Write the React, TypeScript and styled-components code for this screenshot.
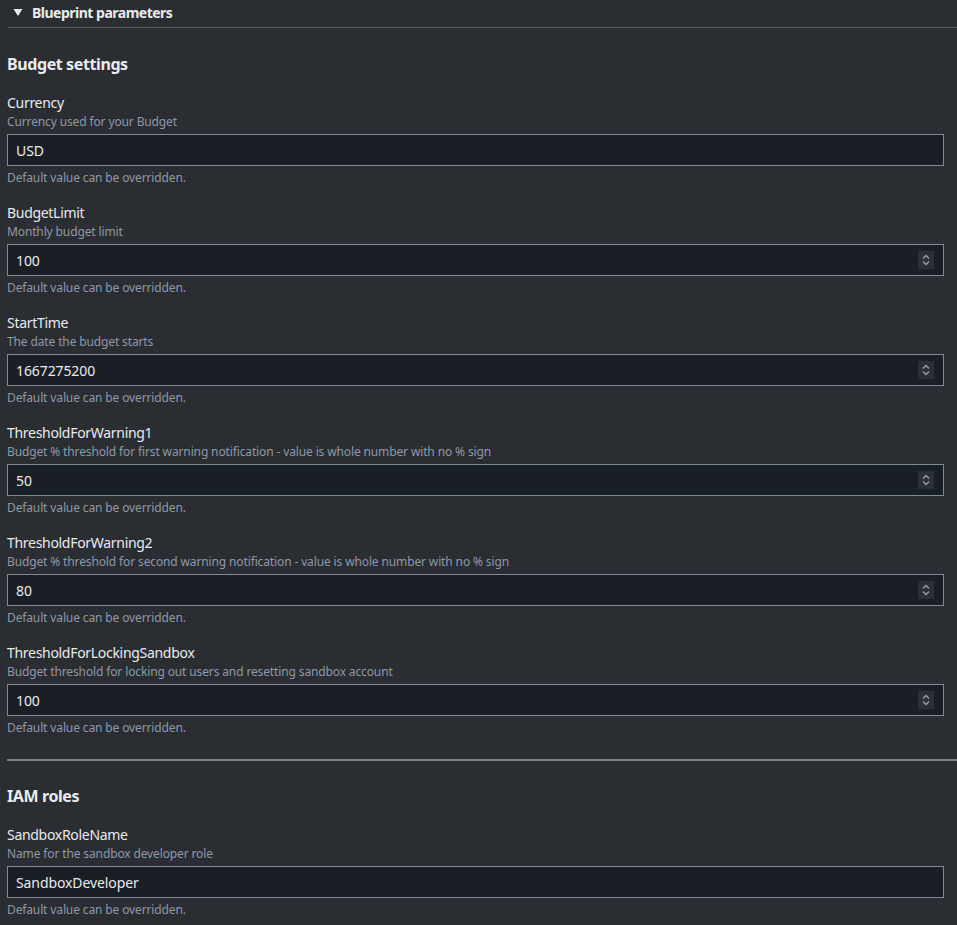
import styled, { createGlobalStyle } from "styled-components";

const GlobalStyle = createGlobalStyle`
  body {
    margin: 0;
    background: #2a2e33;
    font-family: "Noto Sans", "Open Sans", sans-serif;
    color: #d5dbdb;
  }
`;

type Field = {
  name: string;
  description: string;
  value: string;
  numeric?: boolean;
};

const budgetFields: Field[] = [
  { name: "Currency", description: "Currency used for your Budget", value: "USD" },
  { name: "BudgetLimit", description: "Monthly budget limit", value: "100", numeric: true },
  { name: "StartTime", description: "The date the budget starts", value: "1667275200", numeric: true },
  {
    name: "ThresholdForWarning1",
    description:
      "Budget % threshold for first warning notification - value is whole number with no % sign",
    value: "50",
    numeric: true,
  },
  {
    name: "ThresholdForWarning2",
    description:
      "Budget % threshold for second warning notification - value is whole number with no % sign",
    value: "80",
    numeric: true,
  },
  {
    name: "ThresholdForLockingSandbox",
    description: "Budget threshold for locking out users and resetting sandbox account",
    value: "100",
    numeric: true,
  },
];

const iamFields: Field[] = [
  {
    name: "SandboxRoleName",
    description: "Name for the sandbox developer role",
    value: "SandboxDeveloper",
  },
];

const Spinner = () => (
  <SpinBox>
    <svg width="10" height="14" viewBox="0 0 10 14" fill="none">
      <path d="M2 5.5 L5 2.5 L8 5.5" stroke="#9aa0ab" strokeWidth="1.3" />
      <path d="M2 8.5 L5 11.5 L8 8.5" stroke="#9aa0ab" strokeWidth="1.3" />
    </svg>
  </SpinBox>
);

const FormField = ({ field }: { field: Field }) => (
  <FieldWrap>
    <Label>{field.name}</Label>
    <Description>{field.description}</Description>
    <InputBox>
      <InputText>{field.value}</InputText>
      {field.numeric && <Spinner />}
    </InputBox>
    <Hint>Default value can be overridden.</Hint>
  </FieldWrap>
);

const App = () => {
  return (
    <>
      <GlobalStyle />
      <Page>
        <ExpandHeader>
          <svg width="10" height="10" viewBox="0 0 10 10">
            <path d="M0.5 2 L9.5 2 L5 9 Z" fill="#e9ebed" />
          </svg>
          <HeaderTitle>Blueprint parameters</HeaderTitle>
        </ExpandHeader>

        <Section $top={25}>
          <SectionTitle>Budget settings</SectionTitle>
          <FieldList>
            {budgetFields.map((f) => (
              <FormField key={f.name} field={f} />
            ))}
          </FieldList>
        </Section>

        <Divider />

        <Section $top={24}>
          <SectionTitle>IAM roles</SectionTitle>
          <FieldList>
            {iamFields.map((f) => (
              <FormField key={f.name} field={f} />
            ))}
          </FieldList>
        </Section>
      </Page>
    </>
  );
};

export default App;

const Page = styled.div`
  width: 957px;
  min-height: 925px;
  padding-left: 7px;
  box-sizing: border-box;
`;

const ExpandHeader = styled.div`
  height: 28px;
  box-sizing: border-box;
  padding: 0 0 3px 5px;
  margin-left: 1px;
  display: flex;
  align-items: center;
  gap: 9px;
  border-bottom: 1px solid #5a5f66;
`;

const HeaderTitle = styled.span`
  font-size: 14px;
  font-weight: 700;
  letter-spacing: -0.5px;
  color: #e9ebed;
`;

const Section = styled.div<{ $top: number }>`
  padding-right: 13px;
  padding-top: ${({ $top }) => $top}px;
`;

const SectionTitle = styled.h2`
  margin: 0 0 17px 0;
  font-size: 16px;
  line-height: 22px;
  font-weight: 700;
  letter-spacing: -0.4px;
  color: #e9ebed;
`;

const FieldList = styled.div`
  display: flex;
  flex-direction: column;
  gap: 16px;
`;

const FieldWrap = styled.div`
  display: flex;
  flex-direction: column;
`;

const Label = styled.div`
  font-size: 14px;
  line-height: 22px;
  letter-spacing: -0.3px;
  color: #e9ebed;
`;

const Description = styled.div`
  font-size: 12px;
  line-height: 16px;
  letter-spacing: -0.13px;
  color: #8d99a8;
  margin-bottom: 4px;
`;

const InputBox = styled.div`
  height: 32px;
  box-sizing: border-box;
  border: 1px solid #7f8a97;
  background: #1a1f26;
  display: flex;
  align-items: center;
  justify-content: space-between;
  padding: 0 9px 0 8px;
`;

const InputText = styled.span`
  font-size: 14px;
  letter-spacing: -0.1px;
  color: #e9ebed;
`;

const SpinBox = styled.div`
  width: 16px;
  height: 18px;
  background: #2c2f3a;
  display: flex;
  align-items: center;
  justify-content: center;
`;

const Hint = styled.div`
  margin-top: 4px;
  font-size: 12px;
  line-height: 16px;
  letter-spacing: -0.13px;
  color: #8d99a8;
`;

const Divider = styled.div`
  margin-top: 23px;
  height: 2px;
  background: #7d8187;
`;
